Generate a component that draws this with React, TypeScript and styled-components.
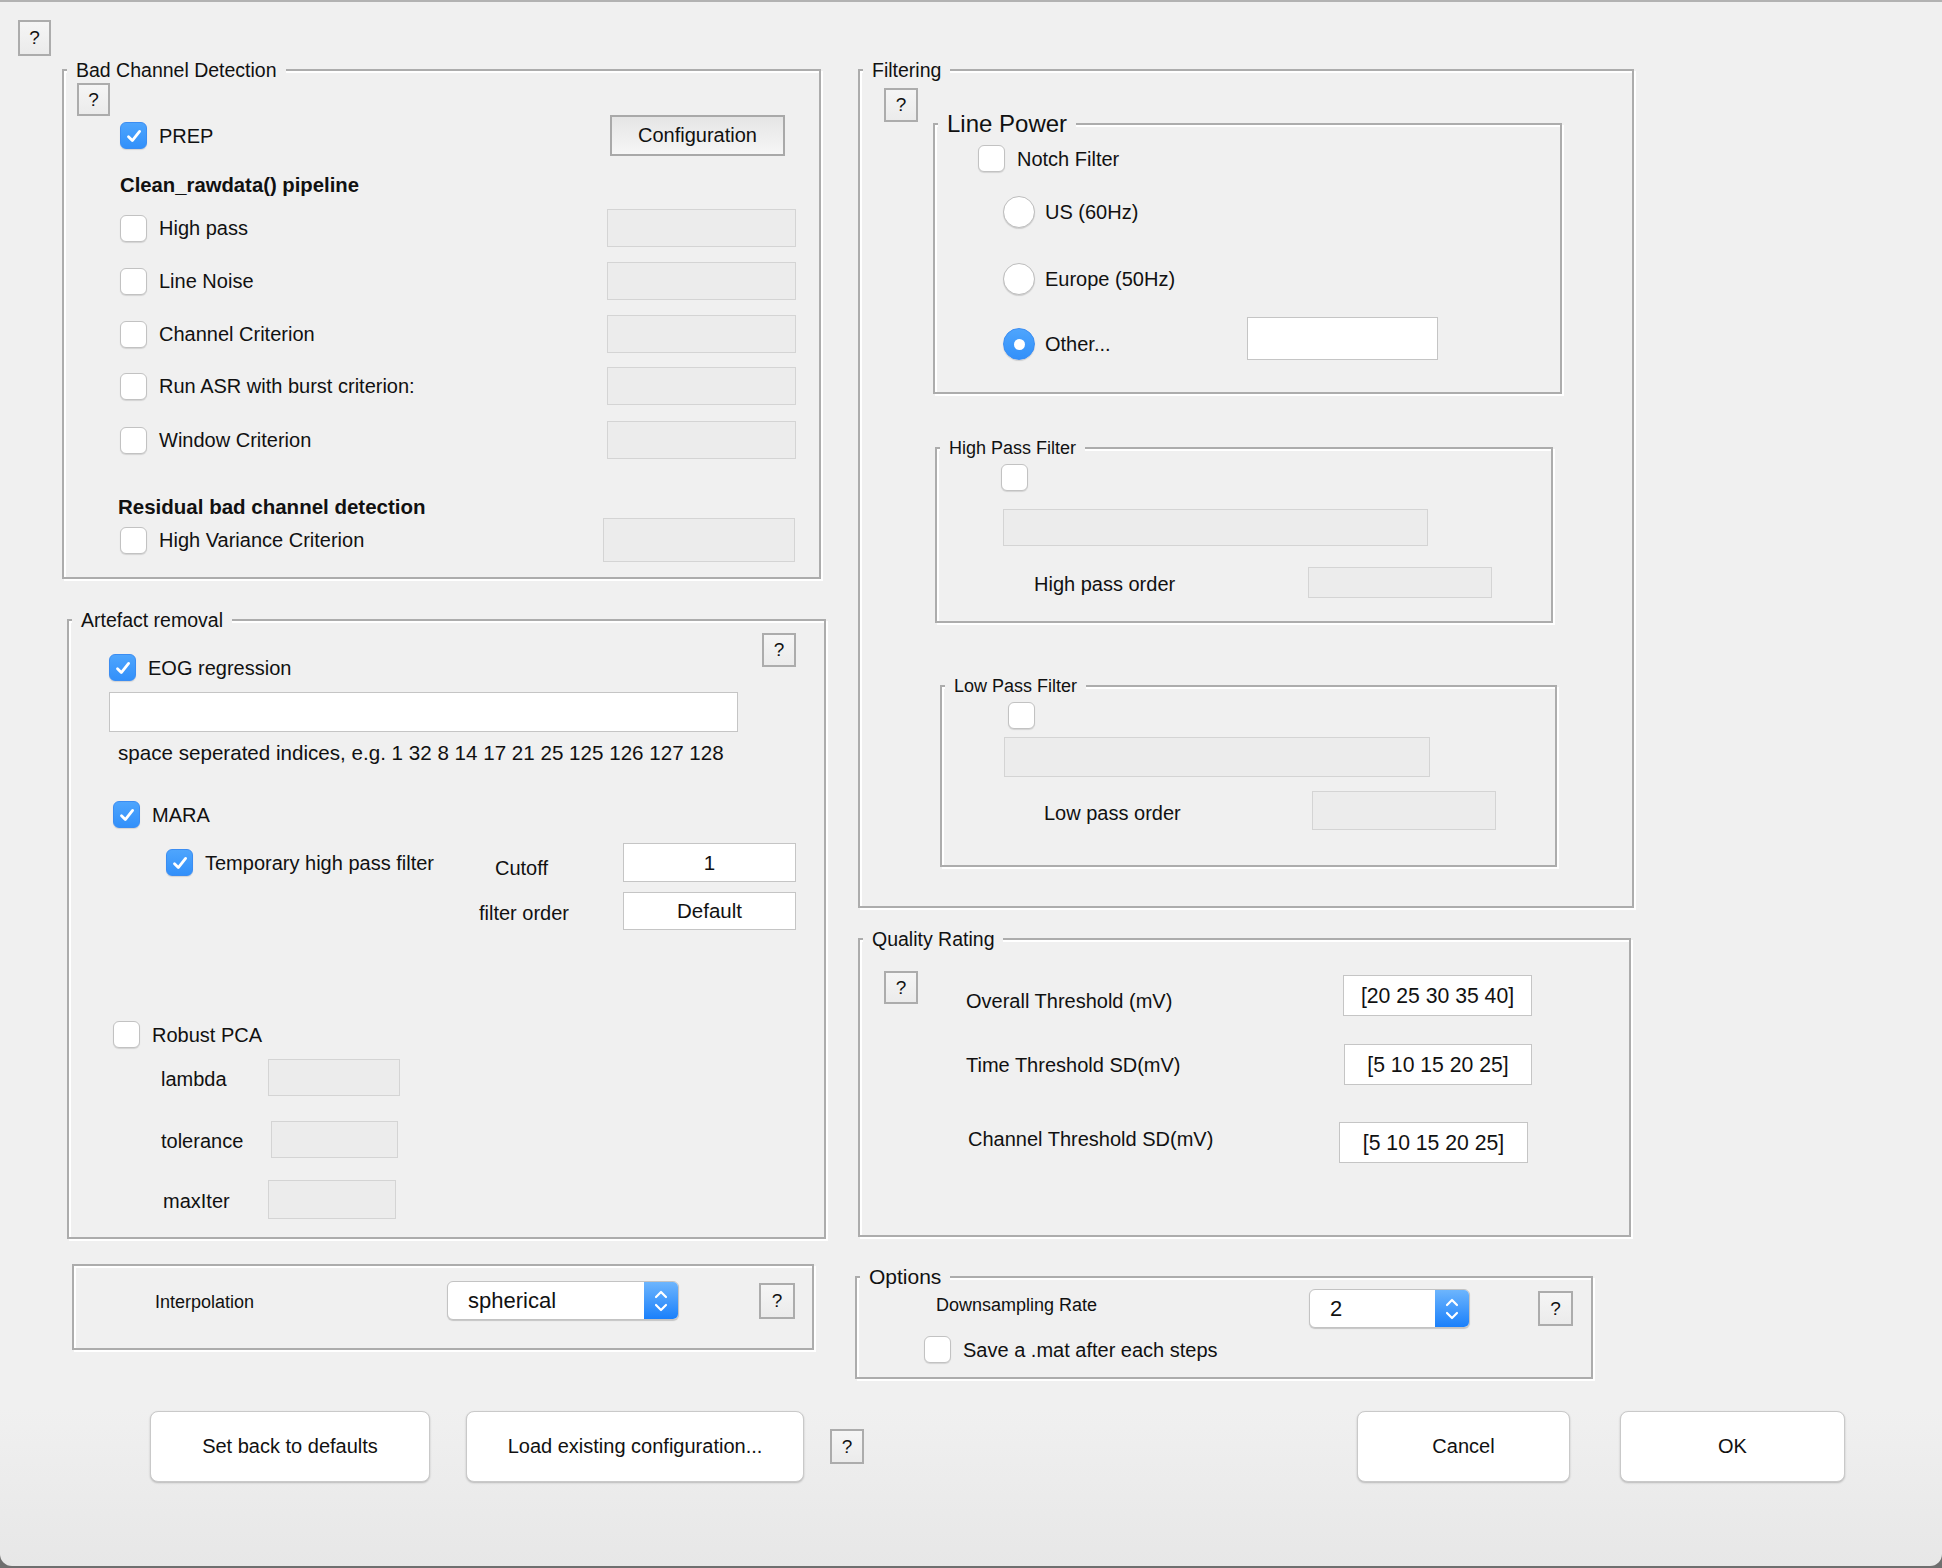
import React from "react";
import styled, { createGlobalStyle } from "styled-components";

const GlobalStyle = createGlobalStyle`
  html, body {
    margin: 0;
    padding: 0;
    background: #6f6f6f;
  }
  * {
    box-sizing: border-box;
  }
`;

const Window = styled.div`
  width: 1942px;
  height: 1566px;
  border-top: 2px solid #b2b2b2;
  border-radius: 0 0 12px 12px;
  background: linear-gradient(to bottom, #f0f0f0 0%, #f0f0f0 90%, #e7e7e7 100%);
  overflow: hidden;
  font-family: "Liberation Sans", Arial, Helvetica, sans-serif;
  font-size: 20px;
  color: #111;
`;

const TopBar = styled.div`
  height: 54px;
  padding: 18px 0 0 18px;
`;

const Columns = styled.div`
  display: flex;
  align-items: flex-start;
  padding-left: 62px;
`;

const Column = styled.div<{ $w: number; $ml?: number }>`
  width: ${(p) => p.$w}px;
  margin-left: ${(p) => p.$ml ?? 0}px;
  display: flex;
  flex-direction: column;
`;

const Panel = styled.fieldset<{ $w: number; $h: number; $ml?: number; $mt?: number }>`
  display: block;
  margin: ${(p) => p.$mt ?? 0}px 0 0 ${(p) => p.$ml ?? 0}px;
  width: ${(p) => p.$w}px;
  height: ${(p) => p.$h}px;
  min-inline-size: 0;
  padding: 0;
  border: 2px solid #acacac;
  box-shadow: inset 2px 2px 0 #fff, 2px 2px 0 #fff;
  flex-shrink: 0;
`;

const PlainPanel = styled.div<{ $w: number; $h: number; $ml?: number; $mt?: number }>`
  margin: ${(p) => p.$mt ?? 0}px 0 0 ${(p) => p.$ml ?? 0}px;
  width: ${(p) => p.$w}px;
  height: ${(p) => p.$h}px;
  padding-top: 15px;
  border: 2px solid #acacac;
  box-shadow: inset 2px 2px 0 #fff, 2px 2px 0 #fff;
`;

const Legend = styled.legend<{ $size?: number; $lh?: number }>`
  margin-left: 3px;
  padding: 0 9px;
  font-size: ${(p) => p.$size ?? 19.5}px;
  line-height: ${(p) => p.$lh ?? 22}px;
  background: #f0f0f0;
  color: #111;
`;

const Body = styled.div`
  display: flex;
  flex-direction: column;
`;

const Row = styled.div<{ $mt?: number; $h: number; $pl?: number; $pr?: number; $align?: string }>`
  display: flex;
  align-items: ${(p) => p.$align ?? "center"};
  flex-shrink: 0;
  margin-top: ${(p) => p.$mt ?? 0}px;
  height: ${(p) => p.$h}px;
  padding-left: ${(p) => p.$pl ?? 0}px;
  padding-right: ${(p) => p.$pr ?? 0}px;
`;

const Spacer = styled.div`
  flex: 1;
`;

const Label = styled.span<{ $w?: number; $size?: number; $bold?: boolean; $ml?: number; $mt?: number; $mb?: number }>`
  width: ${(p) => (p.$w ? `${p.$w}px` : "auto")};
  flex-shrink: 0;
  margin: ${(p) => p.$mt ?? 0}px 0 ${(p) => p.$mb ?? 0}px ${(p) => p.$ml ?? 0}px;
  font-size: ${(p) => p.$size ?? 20}px;
  font-weight: ${(p) => (p.$bold ? 700 : 400)};
  line-height: 22px;
  white-space: nowrap;
`;

const HelpBox = styled.button<{ $w?: number; $h?: number; $ml?: number; $mt?: number }>`
  width: ${(p) => p.$w ?? 34}px;
  height: ${(p) => p.$h ?? 34}px;
  margin: ${(p) => p.$mt ?? 0}px 0 0 ${(p) => p.$ml ?? 0}px;
  flex-shrink: 0;
  padding: 0;
  border: 2px solid #acacac;
  background: linear-gradient(#f5f5f5, #ebebeb);
  font-family: "Liberation Sans", Arial, sans-serif;
  font-size: 19px;
  color: #111;
  display: flex;
  align-items: center;
  justify-content: center;
`;

const ConfigButton = styled.button`
  margin-left: auto;
  width: 175px;
  height: 41px;
  padding: 0;
  border: 2px solid #a9a9a9;
  background: linear-gradient(#e5e5e5, #f6f6f6);
  font-family: "Liberation Sans", Arial, sans-serif;
  font-size: 20px;
  color: #111;
`;

const CheckLabel = styled.label<{ $w?: number; $mt?: number }>`
  display: flex;
  align-items: center;
  gap: 12px;
  width: ${(p) => (p.$w ? `${p.$w}px` : "auto")};
  margin-top: ${(p) => p.$mt ?? 0}px;
  flex-shrink: 0;
  font-size: 20px;
  line-height: 22px;
  white-space: nowrap;
`;

const Box = styled.span<{ $on?: boolean }>`
  width: 27px;
  height: 27px;
  flex-shrink: 0;
  border-radius: 6px;
  border: 1px solid ${(p) => (p.$on ? "#3b8df2" : "#c2c2c2")};
  background: ${(p) => (p.$on ? "linear-gradient(#4ea5fd, #3290fa)" : "#fff")};
  box-shadow: 0 1px 1px rgba(0, 0, 0, 0.12);
  display: flex;
  align-items: center;
  justify-content: center;
`;

const RadioLabel = styled.label<{ $w?: number }>`
  display: flex;
  align-items: center;
  gap: 10px;
  width: ${(p) => (p.$w ? `${p.$w}px` : "auto")};
  flex-shrink: 0;
  font-size: 20px;
  white-space: nowrap;
`;

const Dot = styled.span<{ $on?: boolean }>`
  width: 32px;
  height: 32px;
  flex-shrink: 0;
  border-radius: 50%;
  border: 1px solid ${(p) => (p.$on ? "#3b8df2" : "#bdbdbd")};
  background: ${(p) => (p.$on ? "linear-gradient(#4ea5fd, #3290fa)" : "#fff")};
  box-shadow: 0 1px 1px rgba(0, 0, 0, 0.15);
  display: flex;
  align-items: center;
  justify-content: center;
  &::after {
    content: "";
    display: ${(p) => (p.$on ? "block" : "none")};
    width: 11px;
    height: 11px;
    border-radius: 50%;
    background: #fff;
  }
`;

const Field = styled.div<{ $w: number; $h: number; $white?: boolean; $center?: boolean; $ml?: number; $mt?: number; $size?: number }>`
  width: ${(p) => p.$w}px;
  height: ${(p) => p.$h}px;
  margin: ${(p) => p.$mt ?? 0}px 0 0 ${(p) => p.$ml ?? 0}px;
  flex-shrink: 0;
  padding: 0 12px;
  border: 1px solid ${(p) => (p.$white ? "#c5c5c5" : "#d4d4d4")};
  background: ${(p) => (p.$white ? "#fff" : "#ececec")};
  display: flex;
  align-items: center;
  justify-content: ${(p) => (p.$center ? "center" : "flex-start")};
  font-size: ${(p) => p.$size ?? 20.5}px;
  white-space: nowrap;
`;

const Select = styled.div<{ $w: number }>`
  width: ${(p) => p.$w}px;
  height: 39px;
  flex-shrink: 0;
  border-radius: 6px;
  border: 1px solid #c3c3c3;
  background: #fff;
  box-shadow: 0 1px 1px rgba(0, 0, 0, 0.18);
  display: flex;
  align-items: center;
  overflow: hidden;
  font-size: 22px;
`;

const SelectText = styled.span`
  flex: 1;
  padding-left: 20px;
`;

const Stepper = styled.span`
  width: 34px;
  align-self: stretch;
  background: linear-gradient(#6db5fd, #1a80fb);
  display: flex;
  align-items: center;
  justify-content: center;
`;

const ButtonRow = styled.div`
  display: flex;
  align-items: center;
  margin-top: 32px;
  height: 71px;
  padding: 0 97px 0 150px;
`;

const PushButton = styled.button<{ $w: number; $ml?: number }>`
  width: ${(p) => p.$w}px;
  height: 71px;
  margin-left: ${(p) => p.$ml ?? 0}px;
  flex-shrink: 0;
  border-radius: 8px;
  border: 1px solid #c9c9c9;
  background: #fff;
  box-shadow: 0 1px 2px rgba(0, 0, 0, 0.22);
  font-family: "Liberation Sans", Arial, sans-serif;
  font-size: 20px;
  color: #111;
`;

function Tick() {
  return (
    <svg width="18" height="18" viewBox="0 0 18 18">
      <path d="M3.5 9.8 L7.3 13.6 L14.6 4.4" fill="none" stroke="#fff" strokeWidth="2.8" strokeLinecap="round" strokeLinejoin="round" />
    </svg>
  );
}

function Chevrons() {
  return (
    <svg width="16" height="28" viewBox="0 0 16 28">
      <path d="M3 10 L8 5 L13 10 M3 18 L8 23 L13 18" fill="none" stroke="#fff" strokeWidth="2.2" strokeLinecap="round" strokeLinejoin="round" />
    </svg>
  );
}

function Check({ on, label, w, mt }: { on?: boolean; label?: string; w?: number; mt?: number }) {
  return (
    <CheckLabel $w={w} $mt={mt}>
      <Box $on={on}>{on && <Tick />}</Box>
      {label && <span>{label}</span>}
    </CheckLabel>
  );
}

function Radio({ on, label, w }: { on?: boolean; label: string; w?: number }) {
  return (
    <RadioLabel $w={w}>
      <Dot $on={on} />
      <span>{label}</span>
    </RadioLabel>
  );
}

function Dropdown({ w, value }: { w: number; value: string }) {
  return (
    <Select $w={w}>
      <SelectText>{value}</SelectText>
      <Stepper>
        <Chevrons />
      </Stepper>
    </Select>
  );
}

const cleanRows = [
  { label: "High pass", mt: 12 },
  { label: "Line Noise", mt: 15 },
  { label: "Channel Criterion", mt: 15 },
  { label: "Run ASR with burst criterion:", mt: 14 },
  { label: "Window Criterion", mt: 16 },
];

const pcaRows = [
  { label: "lambda", mt: 11, h: 37, pl: 92, lw: 107, fw: 132 },
  { label: "tolerance", mt: 25, h: 37, pl: 92, lw: 110, fw: 127 },
  { label: "maxIter", mt: 22, h: 39, pl: 94, lw: 105, fw: 128 },
];

function BadChannelPanel() {
  return (
    <Panel $w={759} $h={520} $mt={3}>
      <Legend>Bad Channel Detection</Legend>
      <Body>
        <Row $mt={2} $h={33} $pl={13}>
          <HelpBox $w={33} $h={33}>?</HelpBox>
        </Row>
        <Row $mt={-1} $h={41} $pl={56} $pr={34}>
          <Check on label="PREP" />
          <ConfigButton>Configuration</ConfigButton>
        </Row>
        <Row $mt={17} $h={24} $pl={56}>
          <Label $bold $size={20.3}>Clean_rawdata() pipeline</Label>
        </Row>
        {cleanRows.map((r) => (
          <Row key={r.label} $mt={r.mt} $h={38} $pl={56} $pr={23}>
            <Check label={r.label} />
            <Spacer />
            <Field $w={189} $h={38} />
          </Row>
        ))}
        <Row $mt={36} $h={24} $pl={54}>
          <Label $bold $size={20.5}>Residual bad channel detection</Label>
        </Row>
        <Row $mt={-1} $h={44} $pl={56} $pr={24}>
          <Check label="High Variance Criterion" />
          <Spacer />
          <Field $w={192} $h={44} />
        </Row>
      </Body>
    </Panel>
  );
}

function ArtefactPanel() {
  return (
    <Panel $w={759} $h={630} $mt={30} $ml={5}>
      <Legend>Artefact removal</Legend>
      <Body>
        <Row $h={49} $pl={40} $pr={28} $align="flex-start">
          <Check on label="EOG regression" mt={23} />
          <Spacer />
          <HelpBox $mt={2}>?</HelpBox>
        </Row>
        <Row $mt={12} $h={40} $pl={40}>
          <Field $w={629} $h={40} $white />
        </Row>
        <Row $mt={10} $h={22} $pl={49}>
          <Label $size={20.6}>space seperated indices, e.g. 1 32 8 14 17 21 25 125 126 127 128</Label>
        </Row>
        <Row $mt={37} $h={27} $pl={44}>
          <Check on label="MARA" />
        </Row>
        <Row $mt={15} $h={39} $pl={97}>
          <Check on label="Temporary high pass filter" w={329} />
          <Label $w={128} $mt={11}>Cutoff</Label>
          <Field $w={173} $h={39} $white $center>1</Field>
        </Row>
        <Row $mt={10} $h={38} $pl={410}>
          <Label $w={144} $mt={4}>filter order</Label>
          <Field $w={173} $h={38} $white $center>Default</Field>
        </Row>
        <Row $mt={91} $h={27} $pl={44}>
          <Check label="Robust PCA" />
        </Row>
        {pcaRows.map((r) => (
          <Row key={r.label} $mt={r.mt} $h={r.h} $pl={r.pl}>
            <Label $w={r.lw} $mt={3}>{r.label}</Label>
            <Field $w={r.fw} $h={r.h} />
          </Row>
        ))}
      </Body>
    </Panel>
  );
}

function InterpolationPanel() {
  return (
    <PlainPanel $w={742} $h={86} $mt={25} $ml={10}>
      <Row $h={39} $pl={81}>
        <Label $w={292} $size={18} $mt={3}>Interpolation</Label>
        <Dropdown w={232} value="spherical" />
        <HelpBox $ml={80} $w={36} $h={36}>?</HelpBox>
      </Row>
    </PlainPanel>
  );
}

function FilteringPanel() {
  return (
    <Panel $w={776} $h={849} $mt={3}>
      <Legend>Filtering</Legend>
      <Body>
        <Row $h={313} $pl={24} $align="flex-start">
          <HelpBox $mt={7}>?</HelpBox>
          <Panel $w={629} $h={284} $mt={29} $ml={15}>
            <Legend $size={24} $lh={28}>Line Power</Legend>
            <Body>
              <Row $mt={7} $h={27} $pl={43}>
                <Check label="Notch Filter" />
              </Row>
              <Row $mt={24} $h={32} $pl={68}>
                <Radio label="US (60Hz)" />
              </Row>
              <Row $mt={35} $h={32} $pl={68}>
                <Radio label="Europe (50Hz)" />
              </Row>
              <Row $mt={22} $h={43} $pl={68} $align="flex-end">
                <Radio on label="Other..." w={244} />
                <Field $w={191} $h={43} $white />
              </Row>
            </Body>
          </Panel>
        </Row>
        <Panel $w={618} $h={186} $mt={43} $ml={75}>
          <Legend $size={18}>High Pass Filter</Legend>
          <Body>
            <Row $mt={5} $h={27} $pl={64}>
              <Check />
            </Row>
            <Row $mt={18} $h={37} $pl={66}>
              <Field $w={425} $h={37} />
            </Row>
            <Row $mt={21} $h={31} $pl={97}>
              <Label $w={274} $mt={3}>High pass order</Label>
              <Field $w={184} $h={31} />
            </Row>
          </Body>
        </Panel>
        <Panel $w={617} $h={192} $mt={52} $ml={80}>
          <Legend $size={18}>Low Pass Filter</Legend>
          <Body>
            <Row $mt={5} $h={27} $pl={66}>
              <Check />
            </Row>
            <Row $mt={8} $h={40} $pl={62}>
              <Field $w={426} $h={40} />
            </Row>
            <Row $mt={14} $h={39} $pl={102}>
              <Label $w={268} $mt={5}>Low pass order</Label>
              <Field $w={184} $h={39} />
            </Row>
          </Body>
        </Panel>
      </Body>
    </Panel>
  );
}

function QualityPanel() {
  return (
    <Panel $w={773} $h={309} $mt={20}>
      <Legend>Quality Rating</Legend>
      <Body>
        <Row $h={66} $pl={24} $align="flex-start">
          <HelpBox $mt={21} $h={33}>?</HelpBox>
          <Label $w={377} $ml={48} $mt={40}>Overall Threshold (mV)</Label>
          <Field $w={189} $h={41} $mt={25} $white $center $size={21.2}>[20 25 30 35 40]</Field>
        </Row>
        <Row $mt={28} $h={41} $pl={106}>
          <Label $w={378}>Time Threshold SD(mV)</Label>
          <Field $w={188} $h={41} $white $center $size={21.2}>[5 10 15 20 25]</Field>
        </Row>
        <Row $mt={37} $h={41} $pl={108}>
          <Label $w={371} $mb={8}>Channel Threshold SD(mV)</Label>
          <Field $w={189} $h={41} $white $center $size={21.2}>[5 10 15 20 25]</Field>
        </Row>
      </Body>
    </Panel>
  );
}

function OptionsPanel() {
  return (
    <Panel $w={738} $h={114} $mt={28} $ml={-3}>
      <Legend $size={21} $lh={24}>Options</Legend>
      <Body>
        <Row $h={39} $pl={79}>
          <Label $w={373} $size={18} $mb={8}>Downsampling Rate</Label>
          <Dropdown w={161} value="2" />
          <HelpBox $ml={68} $w={35} $h={35}>?</HelpBox>
        </Row>
        <Row $mt={8} $h={27} $pl={67}>
          <Check label="Save a .mat after each steps" />
        </Row>
      </Body>
    </Panel>
  );
}

export default function App() {
  return (
    <>
      <GlobalStyle />
      <Window>
        <TopBar>
          <HelpBox $w={33} $h={36}>?</HelpBox>
        </TopBar>
        <Columns>
          <Column $w={764}>
            <BadChannelPanel />
            <ArtefactPanel />
            <InterpolationPanel />
          </Column>
          <Column $w={776} $ml={32}>
            <FilteringPanel />
            <QualityPanel />
            <OptionsPanel />
          </Column>
        </Columns>
        <ButtonRow>
          <PushButton $w={280}>Set back to defaults</PushButton>
          <PushButton $w={338} $ml={36}>Load existing configuration...</PushButton>
          <HelpBox $ml={26} $h={35}>?</HelpBox>
          <Spacer />
          <PushButton $w={213}>Cancel</PushButton>
          <PushButton $w={225} $ml={50}>OK</PushButton>
        </ButtonRow>
      </Window>
    </>
  );
}
